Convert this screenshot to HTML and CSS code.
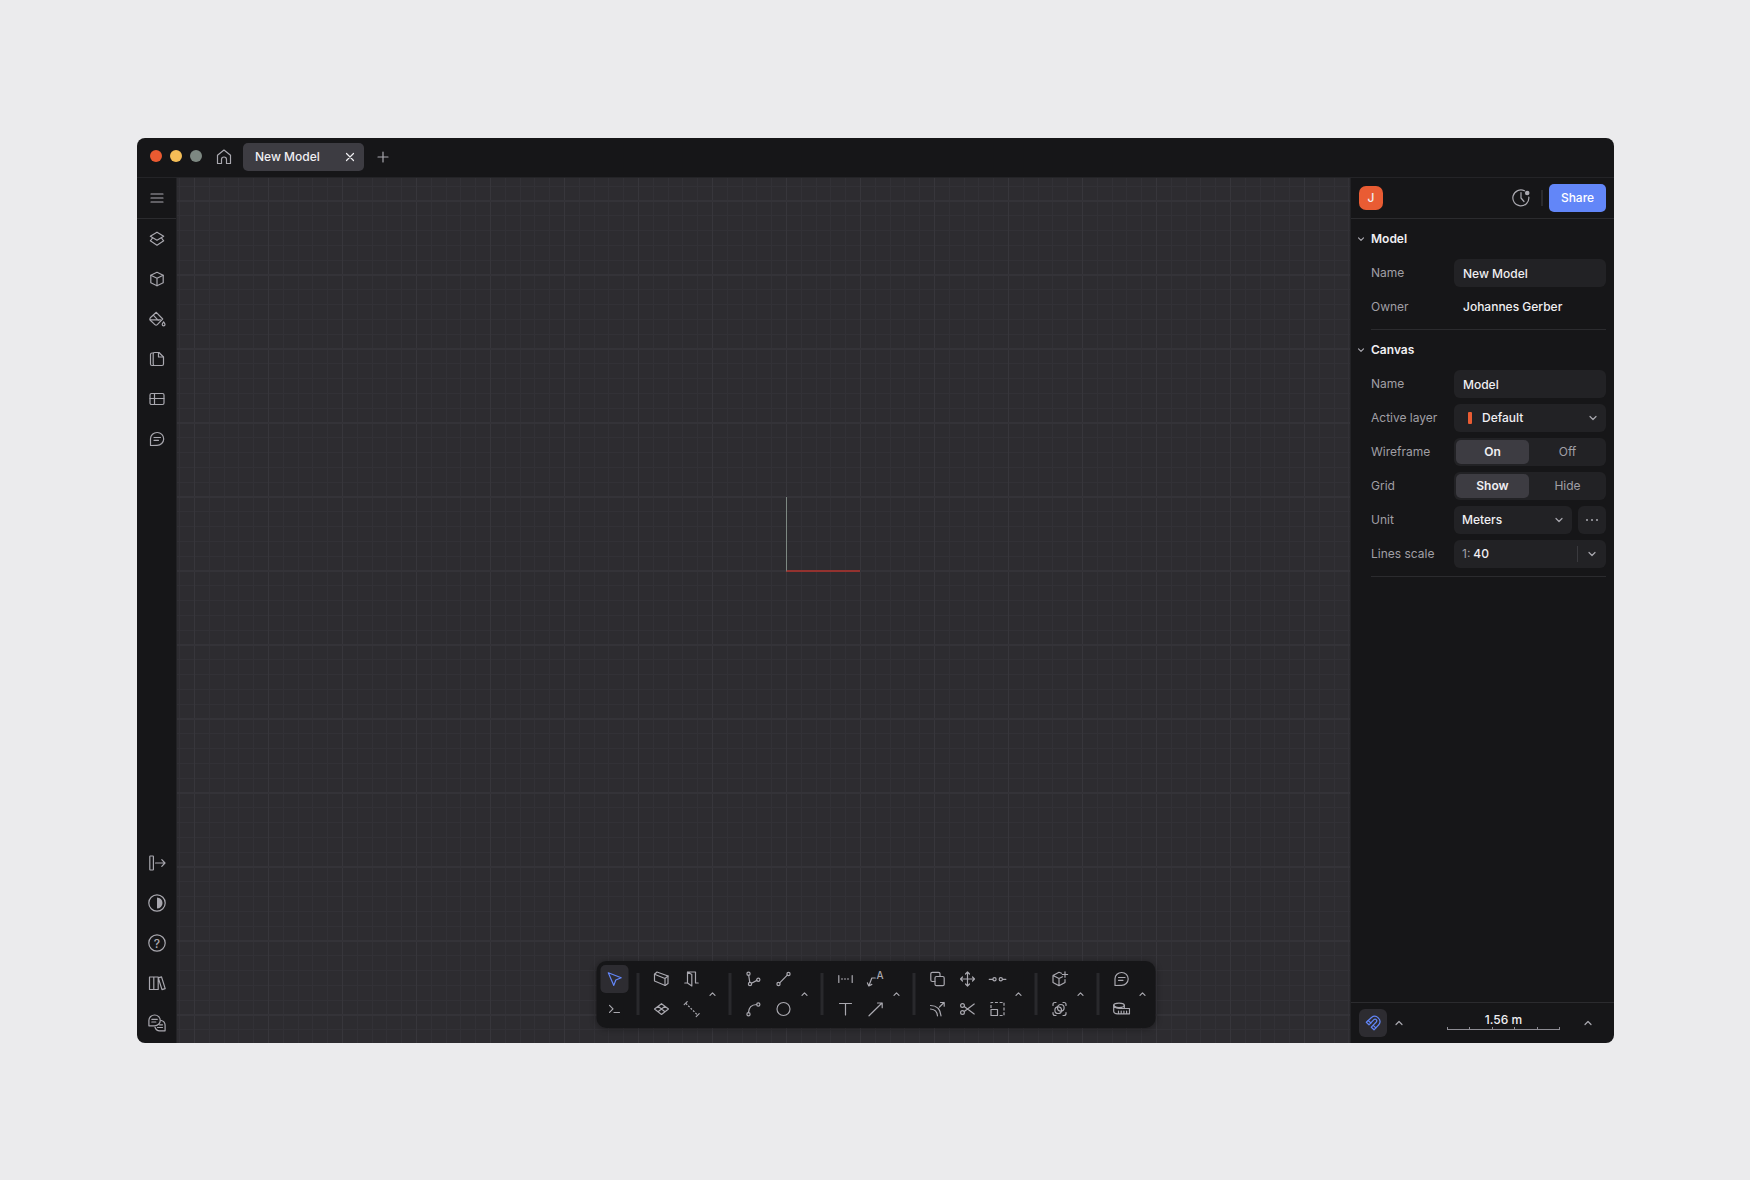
FILE: index.html
```html
<!DOCTYPE html>
<html lang="en">

<head>
  <meta charset="utf-8">
  <meta name="viewport" content="width=device-width, initial-scale=1">
  <title>New Model</title>
  <link rel="stylesheet" href="styles.css">
</head>

<body>
  <div class="window">
    <header class="titlebar">
      <div class="lights">
        <span class="light red"></span>
        <span class="light yellow"></span>
        <span class="light grey"></span>
      </div>
      <button class="home" aria-label="Home">
        <svg class="icon" viewBox="0 0 18 18"><path d="M2.500 7.300L9 2l6.500 5.300V15.500H11.500V11.500a2.500 2.500 0 0 0-5 0v4H2.500z"/></svg>
      </button>
      <div class="tab">
        <span>New Model</span>
        <button class="tab-close" aria-label="Close tab">
          <svg viewBox="0 0 10 10"><path d="M1.500 1.500l7 7M8.500 1.500l-7 7"/></svg>
        </button>
      </div>
      <button class="tab-add" aria-label="New tab">
        <svg viewBox="0 0 12 12"><path d="M6 1v10M1 6h10"/></svg>
      </button>
    </header>

    <div class="workspace">
      <nav class="sidebar">
        <button class="side-menu" aria-label="Menu">
          <svg class="icon" viewBox="0 0 18 18"><path d="M3 5h12M3 9h12M3 13h12"/></svg>
        </button>
        <button aria-label="Layers">
          <svg class="icon" viewBox="0 0 18 18"><path d="M9 2.200l6.700 4L9 10.200l-6.700-4z"/><path d="M4.500 8L2.300 10.800 9 15.200l6.700-4.400L13.500 8"/></svg>
        </button>
        <button aria-label="Components">
          <svg class="icon" viewBox="0 0 18 18"><path d="M9 2.300l6.200 3v7.400L9 15.700l-6.200-3V5.300z"/><path d="M2.800 5.300L9 8.300l6.200-3M9 8.300v7.400"/></svg>
        </button>
        <button aria-label="Materials">
          <svg class="icon" viewBox="0 0 18 18"><path d="M8.300 2.300L14.700 9l-5.400 5.600q-1.200 1.100-2.400 0L2.300 10.200q-1-1.200 0-2.400z"/><path d="M5.500 5.300l4.700 5M2 9.800h10.500"/><path d="M15.600 11.800q1.400 1.800 1.400 2.700a1.400 1.400 0 0 1-2.800 0q0-.9 1.400-2.700z"/></svg>
        </button>
        <button aria-label="Pages">
          <svg class="icon" viewBox="0 0 18 18"><path d="M6.500 2.500H11l4.500 4.500v7q0 1.500-1.500 1.500H6.500q-1.300 0-1.300-1.500V4q0-1.500 1.300-1.500z"/><path d="M10.500 2.500V7h5M5.200 3H4Q2.500 3 2.500 4.500v9.500Q2.500 15.500 4 15.500h2.500"/></svg>
        </button>
        <button aria-label="Tables">
          <svg class="icon" viewBox="0 0 18 18"><rect x="2" y="3.500" width="14" height="11" rx="1.500"/><path d="M2 8.500h14M6.500 3.500v11"/></svg>
        </button>
        <button aria-label="Comments">
          <svg class="icon" viewBox="0 0 18 18"><path d="M2.500 15.500V8.800A6.600 6.400 0 1 1 9 15.300z"/><path d="M6 7.500h6.500M6 10.300h4.500"/></svg>
        </button>

        <span class="side-space"></span>

        <button aria-label="Toggle panel">
          <svg class="icon" viewBox="0 0 18 18"><rect x="1.800" y="2" width="3.600" height="14" rx=".5"/><path d="M7.500 9h9.500M13.800 5.700L17 9l-3.200 3.300"/></svg>
        </button>
        <button aria-label="Theme">
          <svg class="icon" viewBox="0 0 18 18"><circle cx="9" cy="9" r="8.200"/><path class="solid" d="M9 3.500a5.500 5.500 0 0 1 0 11z"/></svg>
        </button>
        <button aria-label="Help">
          <svg class="icon" viewBox="0 0 18 18"><circle cx="9" cy="9" r="8.200"/><text x="9" y="13.500" text-anchor="middle" font-size="12">?</text></svg>
        </button>
        <button aria-label="Library">
          <svg class="icon" viewBox="0 0 18 18"><path d="M1.500 3h8.700v12.500H1.500zM5.800 3v12.500M10.300 3.900l3.200-1 3.700 11.700-3.200 1z"/></svg>
        </button>
        <button aria-label="Community">
          <svg class="icon" viewBox="0 0 18 18"><path d="M.9 11.800V6.300a5.700 5.400 0 1 1 5.700 5.500z"/><path d="M3.800 5.300h5.500M3.800 8h4"/><path d="M13.300 6.500a5 5 0 0 1 3.800 4.800v5.500H12a5 5 0 0 1-5-3.500M9.500 13.500h5M11.500 10.800h3"/></svg>
        </button>
      </nav>

      <main class="canvas">
        <span class="axes"></span>
      </main>

      <aside class="panel">
        <div class="panel-head">
          <span class="avatar">J</span>
          <button class="history" aria-label="Version history">
            <svg class="icon" viewBox="0 0 18 18"><path d="M12.500 1.800A8 8 0 1 0 16.800 8"/><path d="M9 3.500V9l3 3.500"/><circle class="solid" cx="15.200" cy="4" r="2.300"/></svg>
          </button>
          <span class="head-rule"></span>
          <button class="share">Share</button>
        </div>

        <section class="group">
          <h2><svg class="chevron" viewBox="0 0 8 8"><path d="M1.500 2.800L4 5.300l2.500-2.500"/></svg>Model</h2>
          <div class="rows">
            <div class="row">
              <label for="model-name">Name</label>
              <input class="field" id="model-name" type="text" value="New Model">
            </div>
            <div class="row">
              <span>Owner</span>
              <span class="owner">Johannes Gerber</span>
            </div>
          </div>
        </section>

        <section class="group">
          <h2><svg class="chevron" viewBox="0 0 8 8"><path d="M1.500 2.800L4 5.300l2.500-2.500"/></svg>Canvas</h2>
          <div class="rows">
            <div class="row">
              <label for="canvas-name">Name</label>
              <input class="field" id="canvas-name" type="text" value="Model">
            </div>
            <div class="row">
              <label for="layer">Active layer</label>
              <div class="field combo">
                <span class="swatch"></span>
                <select id="layer"><option>Default</option></select>
                <svg class="chevron" viewBox="0 0 8 8"><path d="M1 2.500l3 3 3-3"/></svg>
              </div>
            </div>
            <div class="row">
              <span id="wireframe">Wireframe</span>
              <div class="field switch" role="radiogroup" aria-labelledby="wireframe">
                <label><input type="radio" name="wireframe" checked><span>On</span></label>
                <label><input type="radio" name="wireframe"><span>Off</span></label>
              </div>
            </div>
            <div class="row">
              <span id="grid">Grid</span>
              <div class="field switch" role="radiogroup" aria-labelledby="grid">
                <label><input type="radio" name="grid" checked><span>Show</span></label>
                <label><input type="radio" name="grid"><span>Hide</span></label>
              </div>
            </div>
            <div class="row">
              <label for="unit">Unit</label>
              <div class="pair">
                <div class="field combo">
                  <select id="unit"><option>Meters</option></select>
                  <svg class="chevron" viewBox="0 0 8 8"><path d="M1 2.500l3 3 3-3"/></svg>
                </div>
                <button class="more" aria-label="Unit options">
                  <svg viewBox="0 0 14 4"><circle cx="2" cy="2" r="1"/><circle cx="7" cy="2" r="1"/><circle cx="12" cy="2" r="1"/></svg>
                </button>
              </div>
            </div>
            <div class="row">
              <label for="scale">Lines scale</label>
              <div class="field scale">
                <span>1:</span>
                <input id="scale" type="text" value="40">
                <button aria-label="Scale presets"><svg class="chevron" viewBox="0 0 8 8"><path d="M1 2.500l3 3 3-3"/></svg></button>
              </div>
            </div>
          </div>
        </section>

        <footer class="panel-foot">
          <button class="snap" aria-label="Snapping">
            <svg class="icon" viewBox="0 0 18 18"><path d="M2.300 8.300L7.500 3.500a5.200 5.200 0 0 1 7.500 7L10 15.800 7.300 13.200l5-5.200a1.700 1.700 0 0 0-2.400-2.400L5 10.800z"/><path d="M4.200 6.500l2.700 2.500M9.200 11.300l2.600 2.600"/></svg>
          </button>
          <button class="caret" aria-label="Snap options"><svg class="chevron" viewBox="0 0 8 8"><path d="M1 5.500l3-3 3 3"/></svg></button>
          <div class="ruler">
            <span>1.56 m</span>
            <div class="ticks"><i></i><i></i><i></i><i></i><i></i></div>
          </div>
          <button class="caret" aria-label="Ruler options"><svg class="chevron" viewBox="0 0 8 8"><path d="M1 5.500l3-3 3 3"/></svg></button>
        </footer>
      </aside>
    </div>

    <div class="toolbar">
      <div class="tools cols-1">
        <button class="active" aria-label="Select">
          <svg class="icon" viewBox="0 0 18 18"><path d="M2.800 2.800l12.900 5-5.400 2.200-2 5.400z"/></svg>
        </button>
        <button aria-label="Commands">
          <svg class="icon" viewBox="0 0 18 18"><path d="M4 5.300l3.500 3.500L4 12.300M8.500 12.500H14"/></svg>
        </button>
      </div>
      <span class="split"></span>
      <div class="tools cols-2">
        <button aria-label="Wall">
          <svg class="icon" viewBox="0 0 18 18"><path d="M2 4.200L4.500 2l11 4v7.500l-2.800 2L2 11z"/><path d="M2 4.200l10.500 4.300v7M12.500 8.500l3-2.500"/></svg>
        </button>
        <button aria-label="Door">
          <svg class="icon" viewBox="0 0 18 18"><path d="M2.300 13H5V2h8v11h2.700M5 2l4.300 2.500V16L5 13"/></svg>
        </button>
        <button aria-label="Slab">
          <svg class="icon" viewBox="0 0 18 18"><path d="M2 9l7-5.300L16 9l-7 5.500zM5.500 6.300l7 5.400M12.500 6.300l-7 5.400"/></svg>
        </button>
        <button aria-label="Beam">
          <svg class="icon" viewBox="0 0 18 18"><path d="M1.700 4.700l3-3M13.700 16.700l3-3"/><path class="dash" stroke-dasharray="2 1.400" d="M3.300 3.300l12 12"/></svg>
        </button>
      </div>
      <button class="caret" aria-label="More building tools"><svg class="chevron" viewBox="0 0 8 8"><path d="M1.500 5.300L4 2.800l2.500 2.500"/></svg></button>
      <span class="split"></span>
      <div class="tools cols-2">
        <button aria-label="Polyline">
          <svg class="icon" viewBox="0 0 18 18"><circle cx="4" cy="3.700" r="1.600"/><circle cx="5.500" cy="14" r="1.600"/><circle cx="13.800" cy="9.700" r="1.600"/><path d="M4.200 5.300l1.100 7.100M7 13.300l5.400-2.900"/></svg>
        </button>
        <button aria-label="Line">
          <svg class="icon" viewBox="0 0 18 18"><circle cx="4" cy="14" r="1.600"/><circle cx="14" cy="4" r="1.600"/><path d="M5.200 12.800l7.600-7.600"/></svg>
        </button>
        <button aria-label="Arc">
          <svg class="icon" viewBox="0 0 18 18"><circle cx="4" cy="14.200" r="1.600"/><circle cx="13.800" cy="4.500" r="1.600"/><path d="M4 12.600q.3-7.800 8.200-8.100"/></svg>
        </button>
        <button aria-label="Circle">
          <svg class="icon" viewBox="0 0 18 18"><circle cx="9" cy="9" r="6.500"/></svg>
        </button>
      </div>
      <button class="caret" aria-label="More drawing tools"><svg class="chevron" viewBox="0 0 8 8"><path d="M1.500 5.300L4 2.800l2.500 2.500"/></svg></button>
      <span class="split"></span>
      <div class="tools cols-2">
        <button aria-label="Dimension">
          <svg class="icon" viewBox="0 0 18 18"><path d="M2.300 5.500v7M15.700 5.500v7"/><path class="dash" stroke-dasharray="2 1" d="M4.500 9h9"/></svg>
        </button>
        <button aria-label="Label">
          <svg class="icon" viewBox="0 0 18 18"><text x="13.500" y="8.500" text-anchor="middle" font-size="10">A</text><path d="M8.800 8H5.300L2.500 15.500M.8 12.800l1.500 3.200 3-1.600"/></svg>
        </button>
        <button aria-label="Text">
          <svg class="icon" viewBox="0 0 18 18"><path d="M3 3.500h12M9 3.500v11.500"/></svg>
        </button>
        <button aria-label="Arrow">
          <svg class="icon" viewBox="0 0 18 18"><path d="M2.500 15.800L15.500 3M11 3h4.700v4.700"/></svg>
        </button>
      </div>
      <button class="caret" aria-label="More annotation tools"><svg class="chevron" viewBox="0 0 8 8"><path d="M1.500 5.300L4 2.800l2.500 2.500"/></svg></button>
      <span class="split"></span>
      <div class="tools cols-3">
        <button aria-label="Duplicate">
          <svg class="icon" viewBox="0 0 18 18"><rect x="6.500" y="6.500" width="9.200" height="9.200" rx="1.500"/><path d="M6.500 11.500h-2.700q-1.500 0-1.500-1.500V3.800q0-1.500 1.500-1.500H10q1.500 0 1.500 1.500v2.700"/></svg>
        </button>
        <button aria-label="Move">
          <svg class="icon" viewBox="0 0 18 18"><path d="M9 2v14M2 9h14M7 4l2-2 2 2M7 14l2 2 2-2M4 7L2 9l2 2M14 7l2 2-2 2"/></svg>
        </button>
        <button aria-label="Split">
          <svg class="icon" viewBox="0 0 18 18"><circle cx="6" cy="9.300" r="1.600"/><circle cx="12.300" cy="9.300" r="1.600"/><path d="M.5 9.300h3.800M14 9.300h3.700"/></svg>
        </button>
        <button aria-label="Offset">
          <svg class="icon" viewBox="0 0 18 18"><path d="M2 5.500q9.500 0 10.500 10.300M2 9q6.500.5 7 6.800M11 7l4.500-4.500M12 2.500h3.700v3.700"/></svg>
        </button>
        <button aria-label="Trim">
          <svg class="icon" viewBox="0 0 18 18"><circle cx="4" cy="5.500" r="1.900"/><circle cx="4" cy="12.500" r="1.900"/><path d="M5.700 6.500l10 7.500M5.700 11.500l10-7.500"/></svg>
        </button>
        <button aria-label="Scale">
          <svg class="icon" viewBox="0 0 18 18"><path d="M2.500 9.500h6.500v6H2.500z"/><path class="dash" stroke-dasharray="3 1.700" d="M2.500 8V2.500h13v13H9"/></svg>
        </button>
      </div>
      <button class="caret" aria-label="More edit tools"><svg class="chevron" viewBox="0 0 8 8"><path d="M1.500 5.300L4 2.800l2.500 2.500"/></svg></button>
      <span class="split"></span>
      <div class="tools cols-1">
        <button aria-label="Create component">
          <svg class="icon" viewBox="0 0 18 18"><path d="M11 3.200L8.500 2.300l-6 3.200v7l6 3.200 6-3.200V9.500M2.500 5.500l6 3 3.500-1.700M8.500 8.500v7.200M14.500 1.800v5.400M11.800 4.500h5.400"/></svg>
        </button>
        <button aria-label="Find objects">
          <svg class="icon" viewBox="0 0 18 18"><path d="M2.500 5.500v-1q0-2 2-2h1M12.500 2.500h1q2 0 2 2v1M15.500 12.500v1q0 2-2 2h-1M5.500 15.500h-1q-2 0-2-2v-1"/><circle cx="10.300" cy="7.800" r="3.300"/><circle cx="7.700" cy="10.200" r="3.300"/></svg>
        </button>
      </div>
      <button class="caret" aria-label="More component tools"><svg class="chevron" viewBox="0 0 8 8"><path d="M1.500 5.300L4 2.800l2.500 2.500"/></svg></button>
      <span class="split"></span>
      <div class="tools cols-1">
        <button aria-label="Comment">
          <svg class="icon" viewBox="0 0 18 18"><path d="M2.500 15.500V8.800A6.600 6.400 0 1 1 9 15.300z"/><path d="M6 7.500h6.500M6 10.300h4.500"/></svg>
        </button>
        <button aria-label="Measure">
          <svg class="icon" viewBox="0 0 18 18"><ellipse cx="6.500" cy="5.300" rx="5.300" ry="2.200"/><path d="M1.200 5.300v6q0 2.500 4 2.500H17V8.500H6.500Q3 8.500 1.200 5.300M11.800 5.300v3.200M6 11v2.500M8.700 11v2.500M11.400 11v2.500M14.100 11v2.500"/></svg>
        </button>
      </div>
      <button class="caret" aria-label="More review tools"><svg class="chevron" viewBox="0 0 8 8"><path d="M1.500 5.300L4 2.800l2.500 2.500"/></svg></button>
    </div>
  </div>
</body>

</html>
```
FILE: styles.css
```css
:root {
  --bg: #161618;
  --field: #222225;
  --raised: #3d3c42;
  --line: #2b2b2e;
  --canvas: #2d2c30;
  --grid-minor: #323136;
  --grid-major: #343338;
  --text: #f0eff2;
  --text-dim: #a09fa5;
  --icon: #a9a8af;
  --blue: #6286f8;
  --orange: #e95c33;
}

* {
  box-sizing: border-box;
  margin: 0;
  padding: 0;
}

body {
  display: flex;
  min-height: 100vh;
  padding: 138px 136px 137px 137px;
  background: #ebebed;
  color: var(--text);
  font: 500 12px/16px Inter, "Liberation Sans", sans-serif;
}

button,
input,
select {
  font: inherit;
  color: inherit;
  background: none;
  border: 0;
  outline: 0;
}

button {
  display: flex;
  align-items: center;
  justify-content: center;
  color: var(--icon);
  cursor: pointer;
}

svg {
  display: block;
  fill: none;
  stroke: currentColor;
  stroke-width: 1.2;
  stroke-linecap: round;
  stroke-linejoin: round;
}

.icon {
  width: 18px;
  height: 18px;
}

.icon text,
.icon .solid {
  fill: currentColor;
  stroke: none;
}

.dash {
  stroke-linecap: butt;
}

.chevron {
  flex: none;
  width: 8px;
  height: 8px;
  color: var(--icon);
}

.window {
  position: relative;
  flex: 1;
  display: flex;
  flex-direction: column;
  border-radius: 8px;
  background: var(--bg);
  overflow: hidden;
}

/* title bar */

.titlebar {
  display: flex;
  align-items: center;
  height: 40px;
  padding: 0 13px 2px;
  border-bottom: 1px solid #242427;
}

.lights {
  display: flex;
  gap: 8px;
  padding-bottom: 2px;
}

.light {
  width: 12px;
  height: 12px;
  border-radius: 50%;
}

.red {
  background: #ea5a31;
}

.yellow {
  background: #f5be57;
}

.grey {
  background: #7d8882;
}

.home {
  margin-left: 13px;
}

.tab {
  display: flex;
  align-items: center;
  justify-content: space-between;
  width: 121px;
  height: 28px;
  margin-left: 10px;
  padding: 0 9px 0 12px;
  border-radius: 5px;
  background: var(--raised);
}

.tab-close svg {
  width: 10px;
  height: 10px;
  color: var(--text);
}

.tab-add {
  margin-left: 13px;
}

.tab-add svg {
  width: 12px;
  height: 12px;
}

/* left bar, canvas and panel */

.workspace {
  flex: 1;
  display: flex;
}

.sidebar {
  display: flex;
  flex-direction: column;
  width: 40px;
  border-right: 1px solid #222225;
}

.sidebar button {
  height: 40px;
}

.sidebar .side-menu {
  height: 41px;
  border-bottom: 1px solid var(--line);
}

.side-space {
  flex: 1;
}

.canvas {
  position: relative;
  flex: 1;
  background-color: var(--canvas);
  background-image:
    linear-gradient(var(--grid-major) 2px, transparent 2px),
    linear-gradient(90deg, #37363b 1px, transparent 1px),
    linear-gradient(transparent 15px, var(--grid-minor) 15px 16px, transparent 16px 30px, var(--grid-minor) 30px 31px, transparent 31px 45px, var(--grid-minor) 45px 46px, transparent 46px 60px, var(--grid-minor) 60px 61px, transparent 61px),
    linear-gradient(90deg, transparent 15px, var(--grid-minor) 15px 16px, transparent 16px 30px, var(--grid-minor) 30px 31px, transparent 31px 44px, var(--grid-minor) 44px 45px, transparent 45px 59px, var(--grid-minor) 59px 60px, transparent 60px);
  background-size: 74px 74px;
  background-position: 17px 22px;
}

/* model origin, one major cell on each side */
.axes {
  position: absolute;
  left: 609px;
  top: 319px;
  width: 74px;
  height: 75px;
  border-left: 1px solid #7d8882;
  border-bottom: 2px solid #93322f;
}

.panel {
  display: flex;
  flex-direction: column;
  width: 264px;
  border-left: 1px solid #222225;
}

.panel-head {
  display: flex;
  align-items: center;
  height: 41px;
  padding: 0 8px;
  border-bottom: 1px solid var(--line);
}

.avatar {
  width: 24px;
  border-radius: 7px;
  background: var(--orange);
  line-height: 24px;
  text-align: center;
}

.history {
  margin-left: auto;
}

.head-rule {
  width: 2px;
  height: 16px;
  margin: 0 6px 0 11px;
  background: var(--line);
}

.share {
  width: 57px;
  height: 28px;
  border-radius: 5px;
  background: var(--blue);
  color: #fff;
}

.group h2 {
  display: flex;
  align-items: center;
  gap: 6px;
  height: 40px;
  padding-left: 6px;
  font-size: 12px;
  font-weight: 600;
}

.rows {
  display: grid;
  gap: 6px;
  margin: 0 8px 0 20px;
  padding-bottom: 8px;
  border-bottom: 1px solid var(--line);
}

.row {
  display: grid;
  grid-template-columns: 83px 1fr;
  align-items: center;
  height: 28px;
  color: var(--text-dim);
  font-weight: 400;
}

.field {
  width: 100%;
  min-width: 0;
  height: 28px;
  border-radius: 6px;
  background: var(--field);
  color: var(--text);
  font-weight: 500;
}

input.field,
.owner {
  padding: 0 9px;
}

.owner {
  color: var(--text);
  font-weight: 500;
}

.combo {
  position: relative;
  display: flex;
  align-items: center;
  padding: 0 9px 0 8px;
}

.combo select {
  flex: 1;
  min-width: 0;
  appearance: none;
}

.swatch {
  width: 4px;
  height: 12px;
  margin: 0 10px 0 6px;
  border-radius: 1px;
  background: var(--orange);
}

.switch {
  display: grid;
  grid-template-columns: 1fr 1fr;
  gap: 2px;
  padding: 2px;
}

.switch input {
  position: absolute;
  opacity: 0;
}

.switch span {
  display: block;
  border-radius: 5px;
  color: var(--text-dim);
  font-weight: 400;
  line-height: 24px;
  text-align: center;
}

.switch input:checked + span {
  background: var(--raised);
  color: var(--text);
  font-weight: 600;
}

.pair {
  display: flex;
  gap: 6px;
}

.more {
  flex: none;
  width: 28px;
  border-radius: 6px;
  background: var(--field);
}

.more svg {
  width: 14px;
  height: 4px;
  fill: currentColor;
  stroke: none;
}

.scale {
  display: flex;
  align-items: center;
  gap: 3px;
  padding-left: 8px;
}

.scale span {
  color: var(--text-dim);
  font-weight: 400;
}

.scale input {
  flex: 1;
  min-width: 0;
}

.scale button {
  width: 29px;
  height: 16px;
  border-left: 1px solid #3a3a3e;
}

.panel-foot {
  display: flex;
  align-items: center;
  height: 41px;
  margin-top: auto;
  padding: 0 19px 0 8px;
  border-top: 1px solid var(--line);
}

.snap {
  width: 28px;
  height: 28px;
  border-radius: 6px;
  background: #2d2c31;
  color: var(--blue);
}

.caret {
  width: 15px;
}

.snap + .caret {
  margin-left: 4px;
}

.ruler {
  width: 113px;
  margin: 0 20px 0 auto;
  padding-bottom: 5px;
  text-align: center;
}

.ruler span {
  display: block;
  line-height: 15px;
}

.ticks {
  display: grid;
  grid-template-columns: repeat(5, 1fr);
  border: solid #8d8c93;
  border-width: 0 1px 1px 0;
}

.ticks i {
  height: 2px;
  border-left: 1px solid #8d8c93;
}

/* drawing tools, centred over the window */

.toolbar {
  position: absolute;
  left: 50%;
  bottom: 15px;
  display: flex;
  align-items: center;
  padding: 4px 5px 5px 4px;
  border-radius: 10px;
  background: var(--bg);
  box-shadow: 0 1px 6px rgba(0, 0, 0, 0.35);
  transform: translateX(-50%);
}

.tools {
  display: grid;
  grid-template-rows: 28px 28px;
  gap: 2px;
}

.cols-1 {
  grid-template-columns: 28px;
}

.cols-2 {
  grid-template-columns: repeat(2, 28px);
}

.cols-3 {
  grid-template-columns: repeat(3, 28px);
}

.tools button {
  border-radius: 5px;
}

.tools .active {
  background: #2d2c31;
  color: var(--blue);
}

.split {
  width: 3px;
  height: 42px;
  margin: 0 8px;
  background: #29292c;
}
```
